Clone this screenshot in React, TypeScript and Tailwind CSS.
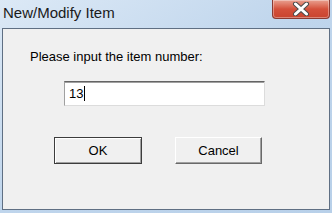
const font = { fontFamily: '"Liberation Sans", Arial, sans-serif' };

const CloseButton = () => (
  <div className="mr-[2px] flex h-[19px] w-[58px] items-center justify-center rounded-b-[4px] border border-t-0 border-[#8a3b33] bg-gradient-to-b from-[#e8a090] via-[#d4503b] to-[#c9442e] shadow-[inset_0_0_0_1px_rgba(255,255,255,0.35)]">
    <svg width="18" height="14" viewBox="0 0 18 14">
      <path
        d="M3.5 2 L14.5 12 M14.5 2 L3.5 12"
        fill="none"
        stroke="#4a4a4a"
        strokeWidth="5"
        strokeLinecap="round"
      />
      <path
        d="M3.5 2 L14.5 12 M14.5 2 L3.5 12"
        fill="none"
        stroke="#ffffff"
        strokeWidth="3"
        strokeLinecap="round"
      />
    </svg>
  </div>
);

const App = () => {
  return (
    <div
      className="flex h-[213px] w-[332px] flex-col overflow-hidden bg-gradient-to-br from-[#dce9f6] via-[#bfd5ec] to-[#b8d0e9]"
      style={font}
    >
      <div className="flex h-[28px] items-start justify-between">
        <span className="ml-[3px] mt-[4px] text-[15px] leading-[18px] text-[#1a1a1a]">
          New/Modify Item
        </span>
        <CloseButton />
      </div>
      <div className="mx-[2px] flex h-[182px] flex-col border border-[#5f6f83] bg-[#f0f0f0]">
        <div className="ml-[27px] mt-[20px] text-[13px] leading-[15px] text-black">
          Please input the item number:
        </div>
        <div className="ml-[61px] mt-[17px] flex h-[25px] w-[201px] items-center border border-t-[#646464] border-l-[#a0a0a0] border-r-[#dcdcdc] border-b-[#dcdcdc] bg-white shadow-[inset_0_1px_0_#a0a0a0]">
          <span className="ml-[4px] text-[13px] leading-[15px] text-black">13</span>
          <span className="ml-[1px] h-[15px] w-[1px] bg-black" />
        </div>
        <div className="ml-[51px] mt-[31px] flex gap-[33px]">
          <button className="flex h-[27px] w-[88px] items-center justify-center border border-[#3c3c3c] bg-[#f0f0f0] text-[13px] text-black shadow-[inset_1px_1px_0_#ffffff,inset_-1px_-1px_0_#a0a0a0]">
            OK
          </button>
          <button className="flex h-[27px] w-[87px] items-center justify-center border border-t-[#ffffff] border-l-[#ffffff] border-r-[#696969] border-b-[#696969] bg-[#f0f0f0] text-[13px] text-black shadow-[inset_-1px_-1px_0_#a0a0a0]">
            Cancel
          </button>
        </div>
      </div>
    </div>
  );
};

export default App;
